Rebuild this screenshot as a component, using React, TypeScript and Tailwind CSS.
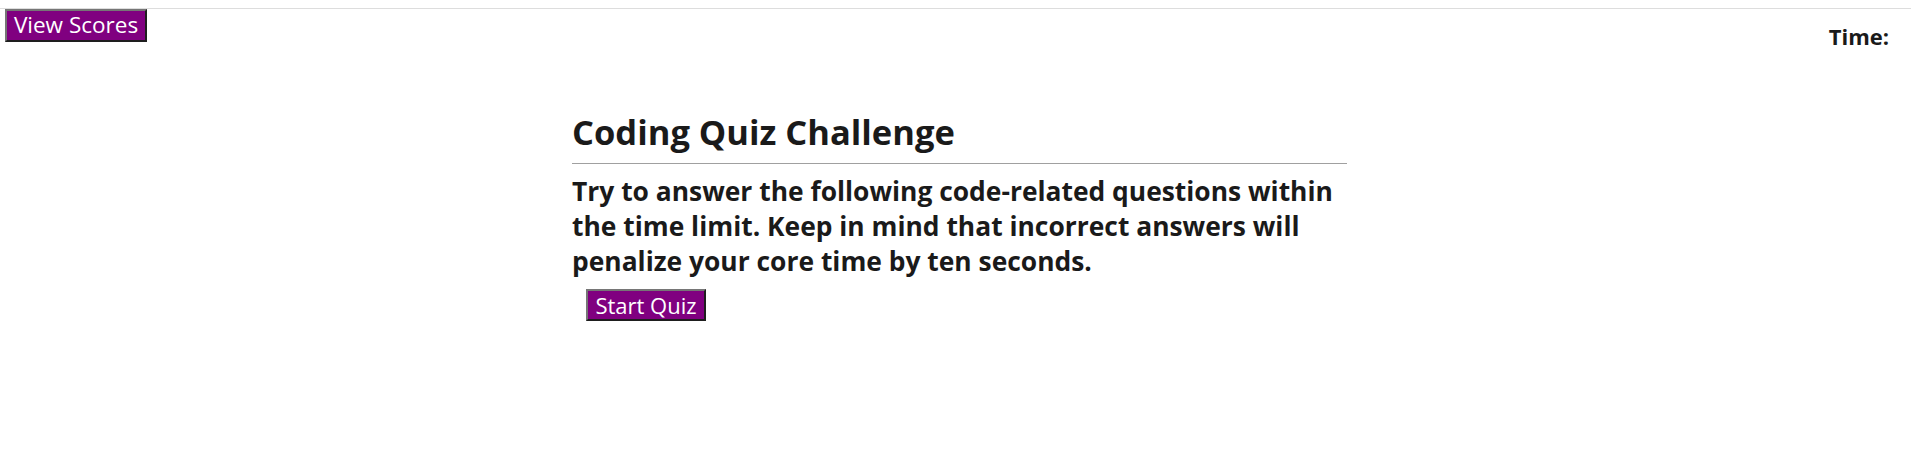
import React from 'react';

export default function App() {
  return (
    <div className="min-h-screen bg-white text-[#1a1a1a]" style={{ fontFamily: '"Open Sans", "Noto Sans", sans-serif' }}>
      <div className="h-[9px] border-b border-[#dddddd]" />
      <header className="flex items-start justify-between">
        <button className="ml-[5px] h-[33px] w-[142px] border-2 border-t-[#767676] border-l-[#767676] border-b-[#1e1e1e] border-r-[#1e1e1e] bg-[#800080] text-[22.5px] leading-none text-white">
          View Scores
        </button>
        <div className="mr-[22px] mt-[16px] text-[22px] font-bold leading-none">Time:</div>
      </header>

      <main className="flex justify-center pl-[8px]">
        <section className="w-[775px] pt-[65px]">
          <h1 className="text-[34.5px] font-bold leading-[40px]">Coding Quiz Challenge</h1>
          <hr className="mt-[11px] border-t border-[#a0a0a0]" />
          <p className="mt-[10px] text-[26.4px] font-bold leading-[35px]">
            Try to answer the following code-related questions within the time limit. Keep in mind that
            incorrect answers will penalize your core time by ten seconds.
          </p>
          <button className="ml-[14px] mt-[10px] h-[32px] w-[120px] border-2 border-t-[#767676] border-l-[#767676] border-b-[#1e1e1e] border-r-[#1e1e1e] bg-[#800080] text-[22px] leading-none text-white">
            Start Quiz
          </button>
        </section>
      </main>
    </div>
  );
}
